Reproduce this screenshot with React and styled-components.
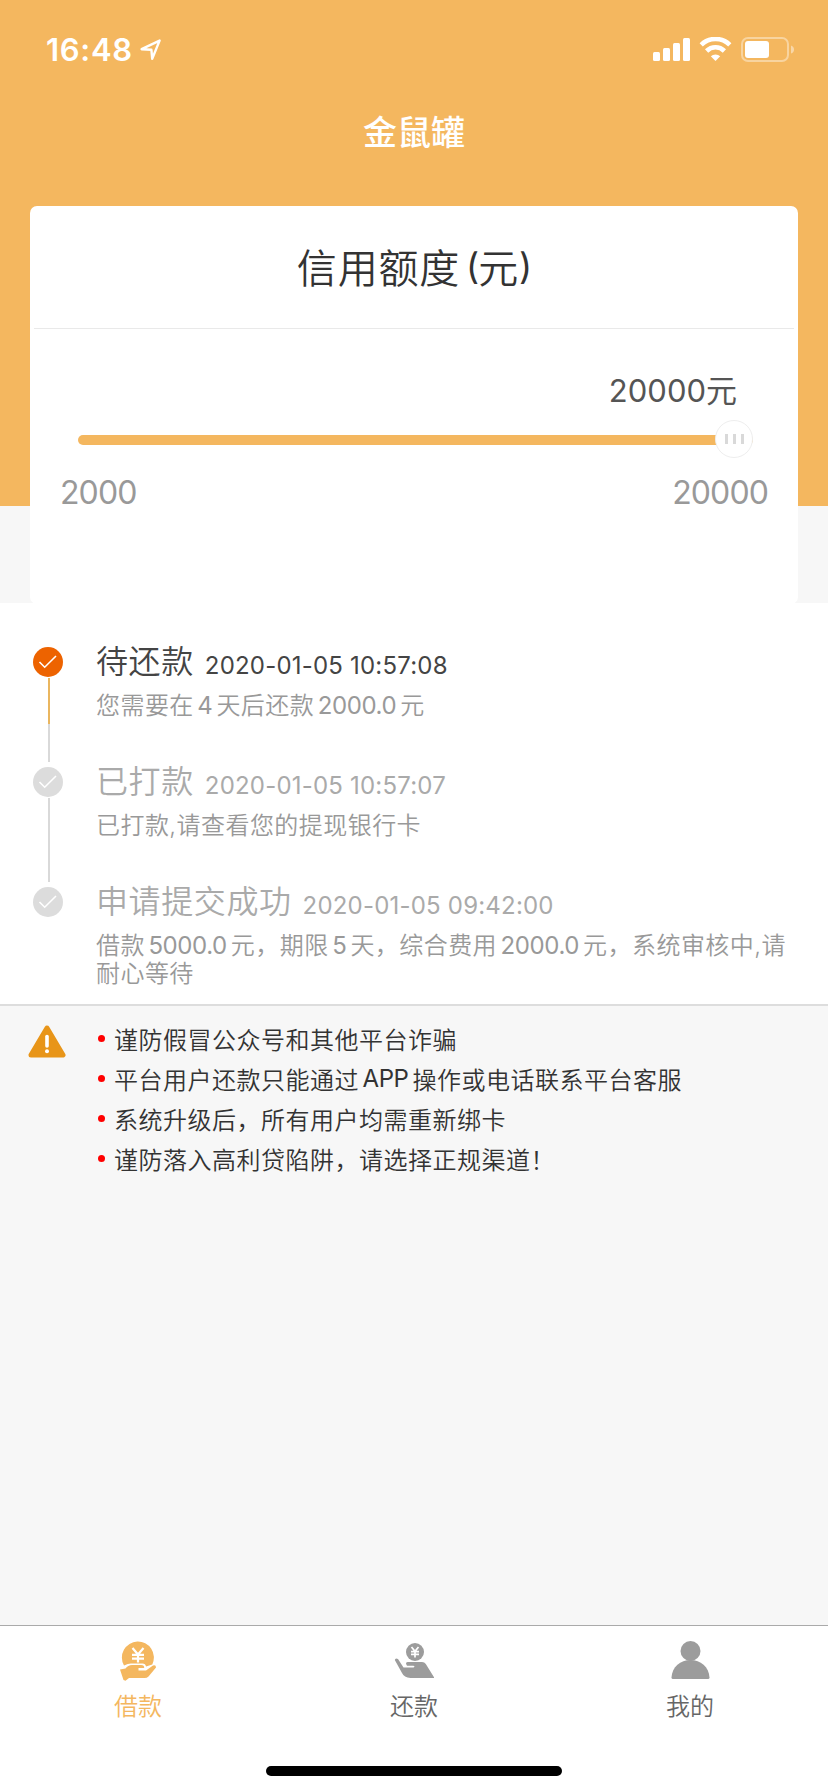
import React, { useState } from "react";
import styled, { createGlobalStyle } from "styled-components";

const steps = [
    { title: '待还款', time: '2020-01-05 10:57:08', lines: [['您需要在', '4', '天后还款', '2000.0', '元']], active: true },
    { title: '已打款', time: '2020-01-05 10:57:07', lines: [['已打款,请查看您的提现银行卡']] },
    { title: '申请提交成功', time: '2020-01-05 09:42:00', lines: [['借款', '5000.0', '元，期限', '5', '天，综合费用', '2000.0', '元，系统审核中,请'], ['耐心等待']] },
]

const tips = [
    ['谨防假冒公众号和其他平台诈骗'],
    ['平台用户还款只能通过', 'APP', '操作或电话联系平台客服'],
    ['系统升级后，所有用户均需重新绑卡'],
    ['谨防落入高利贷陷阱，请选择正规渠道！'],
]

const tabs = [
    { name: 'borrow', label: '借款', Icon: BorrowIcon },
    { name: 'repay', label: '还款', Icon: RepayIcon },
    { name: 'mine', label: '我的', Icon: MineIcon },
]

// latin runs get a little air on both sides
function mixed(parts){
    return parts.map((part, i) => i % 2 ? <Latin key={i}>{part}</Latin> : part)
}

export default function App(){
    const [tab, setTab] = useState('borrow')
    const min = 2000
    const max = 20000
    const value = 20000

    return(
        <Page>
            <GlobalStyle />
            <Top>
                <StatusBar>
                    <Clock>16:48</Clock>
                    <LocationIcon />
                    <StatusIcons />
                </StatusBar>
                <AppTitle>金鼠罐</AppTitle>
                <Card>
                    <CardTitle>信用额度<Paren $gap={6}>(</Paren>元<Paren $gap={0}>)</Paren></CardTitle>
                    <Amount>{value}元</Amount>
                    <Slider>
                        <Track style={{ width: (value - min) / (max - min) * 100 + '%' }} />
                        <Thumb><Grip /><Grip /><Grip /></Thumb>
                    </Slider>
                    <Range>
                        <span>{min}</span>
                        <span>{max}</span>
                    </Range>
                </Card>
            </Top>
            <Steps>
                {steps.map((step, i) => (
                    <Step key={step.title}>
                        <Rail>
                            <Dot $active={step.active}>
                                <svg width="30" height="30" viewBox="0 0 30 30" fill="none" stroke="#fff" strokeWidth="1.6">
                                    <path d="M6.5 15l5.2 5.2L23 9" />
                                </svg>
                            </Dot>
                            {i < steps.length - 1 ? <Line $active={step.active} /> : ''}
                        </Rail>
                        <StepBody>
                            <StepHead $active={step.active}>
                                <StepTitle>{step.title}</StepTitle>
                                <StepTime>{step.time}</StepTime>
                            </StepHead>
                            {step.lines.map((line, n) => <StepText key={n}>{mixed(line)}</StepText>)}
                        </StepBody>
                    </Step>
                ))}
            </Steps>
            <Notice>
                <WarnIcon />
                <Tips>
                    {tips.map((tip, i) => <Tip key={i}>{mixed(tip)}</Tip>)}
                </Tips>
            </Notice>
            <TabBar>
                {tabs.map(({ name, label, Icon }) => (
                    <Tab key={name} $active={tab === name} onClick={() => setTab(name)}>
                        <Icon />
                        <TabLabel>{label}</TabLabel>
                    </Tab>
                ))}
            </TabBar>
            <HomeArea><HomeIndicator /></HomeArea>
        </Page>
    )
}

function LocationIcon(){
    return(
        <svg width="22" height="22" viewBox="0 0 22 22" fill="none" stroke="#fff" strokeWidth="2.4" strokeLinejoin="round">
            <path d="M1.6 10.2L19.6 1.6L12.2 19.8L11.4 10.8Z" />
        </svg>
    )
}

function StatusIcons(){
    return(
        <StatusSvg width="142" height="26" viewBox="0 0 142 26" fill="#fff">
            <rect x="0" y="15" width="7" height="9" rx="1.5" />
            <rect x="10" y="11" width="7" height="13" rx="1.5" />
            <rect x="20" y="6" width="7" height="18" rx="1.5" />
            <rect x="30" y="1" width="7" height="23" rx="1.5" />
            <g fill="none" stroke="#fff" strokeWidth="4.6">
                <path d="M48.2 7.8A20.5 20.5 0 0 1 76.8 7.8" />
                <path d="M53.6 14A12.6 12.6 0 0 1 71.4 14" />
            </g>
            <path d="M57.8 19.3A6.8 6.8 0 0 1 67.2 19.3L62.5 24Z" />
            <rect x="89" y="1" width="46" height="23" rx="6" fill="none" stroke="#fff" strokeOpacity=".4" strokeWidth="2" />
            <rect x="92" y="4" width="24" height="17" rx="3" />
            <path d="M138 8.5Q141 9.5 141 12.5Q141 15.5 138 16.5Z" fillOpacity=".45" />
        </StatusSvg>
    )
}

function WarnIcon(){
    return(
        <WarnSvg width="38" height="34" viewBox="0 0 38 34">
            <path d="M19 3L35 30H3Z" fill="#e89519" stroke="#e89519" strokeWidth="5" strokeLinejoin="round" />
            <path d="M19 11.5V21" stroke="#fff" strokeWidth="3.6" strokeLinecap="round" />
            <circle cx="19" cy="26.3" r="2" fill="#fff" />
        </WarnSvg>
    )
}

function BorrowIcon(){
    return(
        <svg width="40" height="42" viewBox="0 0 40 42" fill="currentColor">
            <path d="M6 25.5A16 16 0 1 1 34.3 24.5L28 26.5Q27.5 23.5 24.5 23.5H13Q10 23.5 6 25.5Z" />
            <path d="M14.5 8L20 14.5L25.5 8M20 14.5V22.5M14 14.8H26M14 18.6H26" fill="none" stroke="#fff" strokeWidth="2.2" />
            <path d="M2 29.5L7.5 28.5Q10 25 14 25H23Q26.5 25.2 26.2 28H20.5V30.5H28L35 25.5Q38 24.5 38 27.5L30.5 36.5Q29 38 26.5 38H11L7.5 40.8L5.5 40Z" />
        </svg>
    )
}

function RepayIcon(){
    return(
        <svg width="40" height="42" viewBox="0 0 40 42" fill="#9c9c9c">
            <circle cx="21" cy="12" r="9" />
            <path d="M17.5 7L21 11.3L24.5 7M21 11V17.5M17 11.6H25M17 14.3H25" fill="none" stroke="#fff" strokeWidth="1.7" />
            <path d="M0.8 20Q1.3 17.5 4 19L9.5 27.5H19.5Q21.5 26.5 19.5 25.7H13Q10.8 22.5 13.5 22H28Q30.5 22.2 31.8 24L40.5 38H16.5Q10 37.5 8 33Z" />
        </svg>
    )
}

function MineIcon(){
    return(
        <svg width="40" height="42" viewBox="0 0 40 42" fill="#9c9c9c">
            <circle cx="20.5" cy="11" r="10" />
            <path d="M1.5 37.5C2 27 10.5 20 20.5 20S39 27 39.5 37.5Q39.5 39 38 39H3Q1.5 39 1.5 37.5Z" />
        </svg>
    )
}


const GlobalStyle = createGlobalStyle`
    * {
        box-sizing: border-box;
    }

    body {
        margin: 0;
        background-color: #f7f7f7;
        font-family: Inter, "Noto Sans CJK SC", sans-serif;
        font-weight: 350;
        color: #333;
    }
`;

const Page = styled.div`
    width: 828px;
    height: 1792px;
    display: flex;
    flex-direction: column;
    background-color: #f7f7f7;
`;

const Top = styled.header`
    height: 603px;
    flex-shrink: 0;
    padding: 0 30px;
    background: linear-gradient(#f4b75f 506px, #f7f7f7 506px);
`;

const StatusBar = styled.div`
    height: 88px;
    padding: 12px 3px 0 16px;
    display: flex;
    align-items: center;
`;

const Clock = styled.span`
    width: 86px;
    margin-right: 8px;
    color: #fff;
    font-size: 31px;
    font-weight: 600;
    line-height: 36px;
    letter-spacing: 0.7px;
`;

const StatusSvg = styled.svg`
    margin-left: auto;
`;

const AppTitle = styled.h1`
    height: 118px;
    margin: 0;
    padding-bottom: 34px;
    display: flex;
    align-items: center;
    justify-content: center;
    color: #fff;
    font-size: 34px;
    font-weight: 500;
`;

const Card = styled.section`
    height: 398px;
    padding: 0 4px;
    border-radius: 7px;
    background-color: #fff;
`;

const CardTitle = styled.h2`
    height: 123px;
    margin: 0;
    padding-bottom: 2px;
    display: flex;
    align-items: center;
    justify-content: center;
    border-bottom: 1px solid #e9e9e9;
    font-size: 40px;
    font-weight: inherit;
    letter-spacing: 0.8px;
`;

const Paren = styled.span`
    margin-left: ${props => props.$gap}px;
    font-size: 36px;
    font-weight: 400;
    letter-spacing: -1px;
`;

const Amount = styled.div`
    height: 72px;
    padding: 38px 57px 0 0;
    text-align: right;
    font-size: 31px;
    font-weight: 400;
    line-height: 48px;
    color: #555;
`;

const Slider = styled.div`
    height: 38px;
    margin: 19px 41px 0 44px;
    display: flex;
    align-items: center;
`;

const Track = styled.div`
    height: 10px;
    margin-top: 2px;
    border-radius: 5px;
    background-color: #f4b75f;
`;

const Thumb = styled.div`
    width: 38px;
    height: 38px;
    margin-left: -38px;
    flex-shrink: 0;
    display: flex;
    align-items: center;
    justify-content: center;
    gap: 5px;
    border: 1px solid #eee;
    border-radius: 50%;
    background-color: #fff;
`;

const Grip = styled.i`
    width: 3px;
    height: 10px;
    background-color: #d9d9d9;
`;

const Range = styled.div`
    padding: 11px 26px 0;
    display: flex;
    justify-content: space-between;
    font-size: 32px;
    font-weight: 400;
    line-height: 48px;
    letter-spacing: -0.9px;
    color: #999;
`;

const Steps = styled.section`
    height: 403px;
    flex-shrink: 0;
    padding: 39px 30px 0 33px;
    border-bottom: 2px solid #ddd;
    background-color: #fff;
`;

const Step = styled.div`
    height: 120px;
    display: flex;
`;

const Rail = styled.div`
    width: 30px;
    margin-right: 33px;
    padding-top: 5px;
    display: flex;
    flex-direction: column;
    align-items: center;
`;

const Dot = styled.div`
    width: 30px;
    height: 30px;
    border-radius: 50%;
    background-color: ${props => props.$active ? '#ed6300' : '#dcdcdc'};
`;

const Line = styled.div`
    width: 2px;
    height: 86px;
    margin: 1px 0 0 2px;
    background: ${props => props.$active ? 'linear-gradient(#eab65f 46px, #d9d9d9 46px)' : '#d9d9d9'};
`;

const StepBody = styled.div`
    flex: 1;
`;

const StepHead = styled.div`
    height: 50px;
    display: flex;
    align-items: flex-start;
    color: ${props => props.$active ? '#444' : '#aaa'};
`;

const StepTitle = styled.span`
    margin-right: 11px;
    font-size: 32px;
    line-height: 40px;
    letter-spacing: 0.6px;
`;

const StepTime = styled.span`
    padding-top: 5px;
    font-size: 24px;
    font-weight: 400;
    line-height: 38px;
    letter-spacing: 0.2px;
`;

const StepText = styled.p`
    margin: 0 -10px 0 0;
    font-size: 24px;
    line-height: 28px;
    letter-spacing: 0.45px;
    white-space: nowrap;
    color: #999;
`;

const Latin = styled.span`
    margin: 0 4px 0 3.5px;
    font-weight: 400;
    letter-spacing: -0.4px;
`;

const Notice = styled.section`
    flex: 1;
    padding: 14px 28px;
    display: flex;
    align-items: flex-start;
`;

const WarnSvg = styled.svg`
    margin: 5px 32px 0 0;
`;

const Tips = styled.ul`
    margin: -2px 0 0;
    padding: 0;
    list-style: none;
`;

const Tip = styled.li`
    height: 40px;
    display: flex;
    align-items: center;
    font-size: 24px;
    letter-spacing: 0.5px;
    white-space: nowrap;

    &:before{
        content: '';
        width: 7px;
        height: 7px;
        margin-right: 9px;
        border-radius: 50%;
        background-color: #f00;
    }
`;

const TabBar = styled.nav`
    height: 120px;
    display: flex;
    border-top: 1px solid #aaa;
    background-color: #fff;
`;

const Tab = styled.button`
    flex: 1;
    padding: 14px 0 0;
    display: flex;
    flex-direction: column;
    align-items: center;
    border: none;
    background: none;
    font-family: inherit;
    font-weight: inherit;
    color: ${props => props.$active ? '#f4b75f' : '#666'};
    cursor: pointer;
`;

const TabLabel = styled.span`
    margin-top: 7px;
    font-size: 24px;
    line-height: 36px;
`;

const HomeArea = styled.div`
    height: 47px;
    padding-top: 21px;
    background-color: #fff;
`;

const HomeIndicator = styled.div`
    width: 296px;
    height: 10px;
    margin: 0 auto;
    border-radius: 5px;
    background-color: #000;
`;
